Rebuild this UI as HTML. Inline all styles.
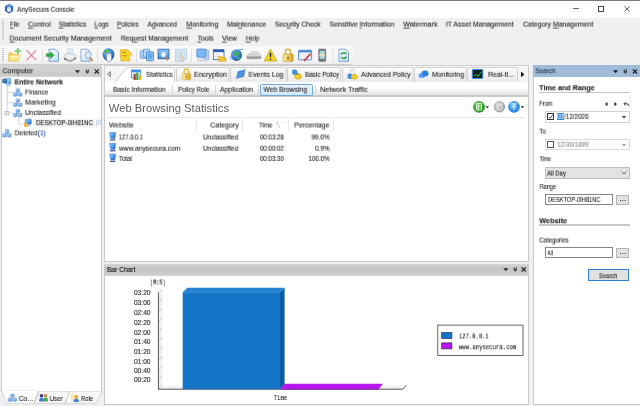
<!DOCTYPE html>
<html><head><meta charset="utf-8">
<style>
html,body{margin:0;padding:0;}
body{width:640px;height:406px;overflow:hidden;background:#f0f0f0;position:relative;font-family:"Liberation Sans",sans-serif;font-size:7.4px;color:#1a1a1a;}
.a{position:absolute;box-sizing:border-box;}
.t{position:absolute;white-space:nowrap;line-height:10px;height:10px;will-change:transform;-webkit-text-stroke:0.100px currentColor;}
.b{font-weight:bold;}
.ti{font-size:7.8px;color:#222;}
.h1{font-size:11.200px;color:#5c5c5c;-webkit-text-stroke:0;}
.mono{font-family:"Liberation Mono",monospace;font-size:7.200px;color:#111;}
.ax{font-size:6.6px;color:#222;}
u{text-decoration:underline;text-decoration-thickness:0.500px;text-underline-offset:0.500px;text-decoration-color:#555;}
svg{position:absolute;overflow:visible;}
</style></head><body>
<!-- title bar -->
<div class="a" style="left:0;top:0;width:640px;height:18px;background:#fff;border-top:1px solid #787878;"></div>
<svg style="left:5px;top:3.800px" width="8" height="10" viewBox="0 0 8 10"><path d="M4 0.200 L7.800 2.300 V6.900 L4 9.300 L0.200 6.900 V2.300 Z" fill="#2357c9" stroke="#2357c9" stroke-width="0.400" stroke-linejoin="round"/><path d="M4 0.600 L7 2.300 L4 3.400 L1 2.300 Z" fill="#4f9ee8"/><path d="M2.100 4 Q2.100 3 4 3 Q5.900 3 5.900 4 V6.300 Q5.900 7.600 4 7.900 Q2.100 7.600 2.100 6.300 Z" fill="#fff"/><rect x="3.600" y="3.600" width="0.800" height="1.100" fill="#2357c9"/></svg>
<div class="a" style="left:572.800px;top:8.400px;width:6px;height:0.900px;background:#666;"></div>
<div class="a" style="left:598px;top:5.600px;width:6.200px;height:6.300px;border:0.800px solid #444;"></div>
<svg style="left:624.300px;top:5.900px" width="7" height="7"><path d="M0.300 0.300 L5.700 5.700 M5.700 0.300 L0.300 5.700" stroke="#444" stroke-width="0.800"/></svg>

<div class="a" style="left:2px;top:21px;width:1.500px;height:20px;background:repeating-linear-gradient(#c2c2c2 0 1px,transparent 1px 2px);"></div>
<!-- toolbar -->
<div class="a" style="left:0;top:45.800px;width:353px;height:19.300px;background:linear-gradient(#fafafa,#f5f5f5 80%,#ececec);border-bottom:1.200px solid #cdcdcd;border-radius:0 0 3px 0;"></div>
<div class="a" style="left:2px;top:48px;width:1.500px;height:13px;background:repeating-linear-gradient(#bdbdbd 0 1px,transparent 1px 2px);"></div>
<!-- toolbar icons -->
<svg style="left:0;top:0" width="360" height="66">
<defs>
<linearGradient id="fy" x1="0" y1="0" x2="0" y2="1"><stop offset="0" stop-color="#fffac8"/><stop offset="1" stop-color="#f2d866"/></linearGradient>
<linearGradient id="db" x1="0" y1="0" x2="1" y2="1"><stop offset="0" stop-color="#ffffff"/><stop offset="1" stop-color="#c4dcf4"/></linearGradient>
<linearGradient id="wb" x1="0" y1="0" x2="0" y2="1"><stop offset="0" stop-color="#9ccbf5"/><stop offset="1" stop-color="#3d86d4"/></linearGradient>
<radialGradient id="gl" cx="40%" cy="35%" r="65%"><stop offset="0" stop-color="#7fc4ff"/><stop offset="1" stop-color="#1553b5"/></radialGradient>
<linearGradient id="gy" x1="0" y1="0" x2="0" y2="1"><stop offset="0" stop-color="#f2f2f2"/><stop offset="1" stop-color="#8f8f8f"/></linearGradient>
<linearGradient id="lk" x1="0" y1="0" x2="1" y2="0"><stop offset="0" stop-color="#fff2a0"/><stop offset="1" stop-color="#d9a521"/></linearGradient>
</defs>
<g transform="translate(0,55.300) scale(1,1.070) translate(0,-54.700)">
<!-- 1 folder + plus -->
<path d="M8.300 51.800 H12.500 L13.500 53.200 H18.800 V60 H8.300 Z" fill="#ecd06a"/>
<path d="M8 60.300 L10.200 54.600 H20.500 L18.300 60.300 Z" fill="url(#fy)" stroke="#d9b840" stroke-width="0.400"/>
<path d="M17.800 47.800 V53.600 M14.900 50.700 H20.700" stroke="#7fcf78" stroke-width="1.900"/>
<!-- 2 red X -->
<path d="M26.500 50 L36.200 59.300 M36.200 50 L26.500 59.300" stroke="#e8748c" stroke-width="1"/>
<line x1="42.500" y1="48" x2="42.500" y2="61" stroke="#d9d9d9" stroke-width="0.800"/>
<!-- 3 doc + green arrow -->
<path d="M49 49 H55.500 L58.500 52 V60.300 H49 Z" fill="url(#db)" stroke="#4a86c8" stroke-width="0.700"/>
<path d="M46.300 53.300 H50.500 V51.300 L54 54.600 L50.500 57.900 V55.900 H46.300 Z" fill="#2fae3a" stroke="#187a22" stroke-width="0.400"/>
<!-- 4 printer -->
<path d="M66.300 53.200 L68 48.300 L73.200 48.800 L72.300 54 Z" fill="#dcecfb" stroke="#a9c4e0" stroke-width="0.400"/>
<path d="M64 55.200 L68.500 52.600 L76 54.600 V58 L70.500 60.800 L64 58.600 Z" fill="#f0f0f0" stroke="#9a9a9a" stroke-width="0.400"/>
<path d="M64 56.800 L70.500 59 L76 56.300 V58 L70.500 60.800 L64 58.600 Z" fill="#7a7a7a"/>
<path d="M66.500 58.200 L70.300 59.600 L73.500 58" fill="none" stroke="#fff" stroke-width="0.700"/>
<!-- 5 preview -->
<path d="M81 49 H87.500 L90 51.500 V60.300 H81 Z" fill="url(#db)" stroke="#5b94d0" stroke-width="0.700"/>
<circle cx="88.300" cy="54.500" r="3" fill="#dff0ff" stroke="#7fa7cf" stroke-width="0.800"/>
<path d="M90.300 57 L92.500 60" stroke="#e0762a" stroke-width="1.500"/>
<line x1="97.600" y1="48" x2="97.600" y2="61" stroke="#d9d9d9" stroke-width="0.800"/>
<!-- 6 globe + mouse -->
<circle cx="108.500" cy="54" r="5.900" fill="url(#gl)"/>
<path d="M104 51 Q107 48.500 110 49.500 Q109 52 106 52.500 Q104.500 53.500 104 51 Z" fill="#4fbf4a"/>
<path d="M106.500 55 Q106.500 52.500 109 52.500 Q111.500 52.500 111.500 55 V58.500 Q111.500 60.500 109 60.500 Q106.500 60.500 106.500 58.500 Z" fill="#fafafa" stroke="#667" stroke-width="0.500"/>
<path d="M109 52.500 V55.500" stroke="#667" stroke-width="0.400"/>
<!-- 7 yellow tag -->
<path d="M120 49.500 H128 L132 54 L129.500 56 L130 60 H121 Z" fill="#f7d42a" stroke="#c79a12" stroke-width="0.500"/>
<path d="M122.500 52 H126 M122.500 54.500 Q124.500 56.500 127 54.500" stroke="#7a5a08" stroke-width="0.600" fill="none"/>
<line x1="136.600" y1="48" x2="136.600" y2="61" stroke="#d9d9d9" stroke-width="0.800"/>
<!-- 8 blue windows -->
<rect x="140.300" y="50.500" width="6.500" height="7" rx="0.800" fill="#b4d8f8" stroke="#3c78bd" stroke-width="0.600"/>
<rect x="143.300" y="49" width="6.500" height="7.500" rx="0.800" fill="#b4d8f8" stroke="#3c78bd" stroke-width="0.600"/>
<rect x="146.500" y="51.500" width="7" height="8.300" rx="0.800" fill="#9ccbf5" stroke="#2f6cb4" stroke-width="0.700"/><rect x="147.800" y="53" width="4.400" height="5.300" fill="#5fa8ec"/>
<!-- 9 screen magnifier -->
<rect x="158" y="49" width="11" height="9" fill="url(#wb)" stroke="#2e67ad" stroke-width="0.800"/>
<circle cx="163.500" cy="54" r="2.600" fill="#e9f5ff" stroke="#9fb9d6" stroke-width="0.700"/>
<path d="M165.500 56.300 L168 59.500" stroke="#d87a3a" stroke-width="1.300"/>
<!-- 10 doc hand -->
<path d="M175.500 49 H186.500 V58 L183 60.500 H175.500 Z" fill="#cfe2f6" stroke="#a9c5e6" stroke-width="0.600"/>
<path d="M180.500 52 L182 56 L184 57.500 L183 60 L181 59.500 Z" fill="#f3d7b0" stroke="#d8b48a" stroke-width="0.400"/>
<line x1="191.600" y1="48" x2="191.600" y2="61" stroke="#d9d9d9" stroke-width="0.800"/>
<!-- 11 computer -->
<rect x="203.500" y="49.500" width="5.500" height="9.500" rx="0.600" fill="#b9cdea" stroke="#7f9ccc" stroke-width="0.500"/>
<rect x="196.800" y="48.800" width="9" height="7.700" rx="0.800" fill="#7db9f2" stroke="#4a84cf" stroke-width="0.700"/>
<path d="M198 58 H205.500 L206.500 60 H197 Z" fill="#dfe8f5" stroke="#9db3d6" stroke-width="0.400"/>
<!-- 12 window folder -->
<rect x="213.300" y="49.500" width="10.700" height="9" fill="#fff" stroke="#2c5fae" stroke-width="0.800"/>
<rect x="213.300" y="49.500" width="10.700" height="2.300" fill="#2c5fae"/>
<path d="M215 54 H219 M215 56 H218" stroke="#8aa" stroke-width="0.500"/>
<path d="M218.500 55.500 H221 L221.800 56.500 H225.800 V60.300 H218.500 Z" fill="#f2c12e" stroke="#b88a10" stroke-width="0.400"/>
<!-- 13 IE globe -->
<circle cx="236.500" cy="54.500" r="5.500" fill="url(#gl)"/>
<path d="M233 52 Q236 50 238.500 51.500 Q239.500 54 237 55.500 Q234 56 233 52 Z M237 57 Q239 56 240.500 57.500 Q239 59.500 237 59 Z" fill="#3fb34a"/>
<path d="M231 58.500 Q229.500 55 236 51 Q241 48.300 243 49.500" fill="none" stroke="#3a8de0" stroke-width="0.800"/>
<!-- 14 drive -->
<path d="M246.700 55 L252.500 51.500 H257.500 L261 55 V57 Q261 58 259.500 58 H248 Q246.700 58 246.700 57 Z" fill="url(#gy)" stroke="#8a8a8a" stroke-width="0.400"/>
<path d="M246.700 55 H261" stroke="#fff" stroke-width="0.500"/>
<!-- 15 warning -->
<path d="M270.500 48.800 L276.800 60 H264.200 Z" fill="#f6d51f" stroke="#b8960c" stroke-width="0.600" stroke-linejoin="round"/>
<path d="M270.500 52.300 V56.300 M270.500 57.600 V58.800" stroke="#111" stroke-width="1.300"/>
<!-- 16 lock -->
<path d="M285.300 54 V51.500 Q285.300 49 288 49 Q290.700 49 290.700 51.500 V54" fill="none" stroke="#d9b43a" stroke-width="1.300"/>
<rect x="283" y="53.500" width="10.200" height="7" rx="1" fill="url(#lk)" stroke="#b98d1a" stroke-width="0.500"/>
<path d="M288 56 V58.300" stroke="#5a4208" stroke-width="1.100"/>
<!-- 17 window pencil -->
<rect x="298.600" y="50" width="13" height="9" rx="0.800" fill="#e9f1fa" stroke="#3f79c4" stroke-width="0.800"/>
<rect x="298.600" y="50" width="13" height="2" fill="#4d8ad6"/>
<path d="M304 60 L310.500 53.300" stroke="#d8383a" stroke-width="1.600"/>
<!-- 18 phone -->
<rect x="318.600" y="48.800" width="7.200" height="11.700" rx="1" fill="#6f7a80" stroke="#555" stroke-width="0.400"/>
<rect x="319.600" y="50.500" width="5.200" height="7.500" fill="#a9d6d6"/>
<rect x="319.600" y="53.500" width="5.200" height="2" fill="#e9dfc4"/>
<line x1="333" y1="48" x2="333" y2="61" stroke="#d9d9d9" stroke-width="0.800"/>
<!-- 19 refresh doc -->
<path d="M339 49 H345.500 L348.500 52 V60.300 H339 Z" fill="url(#db)" stroke="#4a86c8" stroke-width="0.700"/>
<path d="M341 54 Q343.500 51 346.500 53.500 M346.500 56 Q344 59 341 56.500" fill="none" stroke="#27a637" stroke-width="1.400"/>
</g>
</svg>


<!-- left panel -->
<div class="a" style="left:0;top:65.200px;width:102px;height:11.600px;background:linear-gradient(#d3d3d3,#cacaca 85%,#d8d8d8);"></div>
<div class="a" style="left:0.500px;top:76.800px;width:101.500px;height:315.600px;background:#fff;border:1px solid #c9c9c9;border-top:none;"></div>
<svg style="left:75px;top:68.800px" width="26" height="6"><path d="M0 1.200 H5 L2.500 4.200 Z" fill="#222"/><path d="M11.300 0.300 V3 H13.300 V0.300 M10.600 3 H14 M12.300 3 V4.600" stroke="#222" stroke-width="0.800" fill="none"/><path d="M19.600 0.300 L23.800 4.500 M23.800 0.300 L19.600 4.500" stroke="#222" stroke-width="1.100"/></svg>
<!-- bottom tabs -->
<svg style="left:0;top:391.400px" width="104" height="15"><path d="M39 0.500 L34.500 12.600 H64.500 L69.500 0.500" fill="#f7f7f7" stroke="#c4c4c4" stroke-width="0.700"/><path d="M69.500 0.500 L65 12.600 H95.500 L102.300 0.500" fill="#f7f7f7" stroke="#c4c4c4" stroke-width="0.700"/><path d="M1.800 0 L6.500 12.600 H33.500 L38.500 0 Z" fill="#fff" stroke="#c4c4c4" stroke-width="0.700"/><path d="M2.300 0.300 H38" stroke="#fff" stroke-width="1.200"/></svg>

<!-- center top -->
<div class="a" style="left:103.900px;top:64.700px;width:425.600px;height:17.800px;background:#f5f5f5;border:1px solid #cfcfcf;border-bottom:none;"></div>
<svg style="left:104px;top:65px" width="426" height="18">
<path d="M11.500 16.500 L21.500 4.500 Q23 2.500 25.500 2.500 H69 Q70.5 2.5 70.5 4 V16.5" fill="#fff" stroke="#c4c4c4" stroke-width="0.8"/>
<defs><linearGradient id="tg" x1="0" y1="0" x2="0" y2="1"><stop offset="0" stop-color="#fdfdfd"/><stop offset="1" stop-color="#e9e9e9"/></linearGradient></defs><g fill="url(#tg)" stroke="#c8c8c8" stroke-width="0.8">
<path d="M72.500 16.5 V4 Q72.500 2.500 74.000 2.500 H123.500 Q125.000 2.500 125.000 4 V16.5"/>
<path d="M126.400 16.500 V4 Q126.400 2.500 127.900 2.500 H180.500 Q182 2.500 182 4 V16.500"/>
<path d="M183.500 16.500 V4 Q183.500 2.500 185 2.500 H235 Q236.500 2.500 236.500 4 V16.500"/>
<path d="M238.500 16.5 V4 Q238.500 2.500 240.000 2.500 H307.500 Q309.000 2.500 309.000 4 V16.5"/>
<path d="M310.500 16.500 V4 Q310.500 2.500 312.000 2.500 H360.500 Q362.000 2.500 362.000 4 V16.5"/>
<path d="M363.500 16.500 V4 Q363.500 2.500 365.000 2.500 H412.000 Q413.500 2.500 413.500 4 V16.5"/>
</g>
<path d="M6.400 6.600 V11.800 L3.400 9.200 Z" fill="#ddd" stroke="#555" stroke-width="0.700"/>
<path d="M417 6.500 V12.300 L420.400 9.400 Z" fill="#111"/>
<path d="M0 17.500 H11.500 M70.500 17.500 H426" stroke="#c4c4c4" stroke-width="0.8"/>
</svg>
<!-- sub tabs -->
<div class="a" style="left:103.900px;top:82px;width:425.600px;height:14.300px;background:linear-gradient(#fff 0 40%,#e2e2e2);border-left:1px solid #cfcfcf;border-right:1px solid #cfcfcf;border-bottom:1px solid #c9c9c9;"></div>
<div class="a" style="left:171.600px;top:85px;width:1px;height:9px;background:#d5d5d5;"></div>
<div class="a" style="left:214.800px;top:85px;width:1px;height:9px;background:#d5d5d5;"></div>
<div class="a" style="left:257.600px;top:85px;width:1px;height:9px;background:#d5d5d5;"></div>
<div class="a" style="left:315px;top:85px;width:1px;height:9px;background:#d5d5d5;"></div>
<div class="a" style="left:260px;top:84px;width:53px;height:11.500px;background:linear-gradient(#eaf4fc,#d5e8f8);border:1px solid #6fa8d8;border-radius:1.500px;"></div>
<!-- content -->
<div class="a" style="left:103.900px;top:96.300px;width:425.600px;height:165.400px;background:#fff;border:1px solid #c9c9c9;"></div>
<div class="a" style="left:106.500px;top:116.600px;width:418px;height:1px;background:#e8e8e8;"></div>
<div class="a" style="left:196px;top:118.500px;width:1px;height:12.700px;background:#e7e7e7;"></div>
<div class="a" style="left:241.500px;top:118.500px;width:1px;height:12.700px;background:#e7e7e7;"></div>
<div class="a" style="left:287.500px;top:118.500px;width:1px;height:12.700px;background:#e7e7e7;"></div>
<div class="a" style="left:332.500px;top:118.500px;width:1px;height:12.700px;background:#e7e7e7;"></div>
<svg style="left:276px;top:122px" width="8" height="7"><path d="M0.500 0.500 H2 M6 0.500 H7 M0.800 0.500 L4 6.300" fill="none" stroke="#9a9a9a" stroke-width="0.600"/></svg>
<!-- circle buttons -->
<svg style="left:472px;top:99.700px" width="54" height="14">
<defs>
<radialGradient id="gg" cx="40%" cy="35%" r="70%"><stop offset="0" stop-color="#5fd24f"/><stop offset="1" stop-color="#128a12"/></radialGradient>
<radialGradient id="gr" cx="40%" cy="35%" r="70%"><stop offset="0" stop-color="#d6d6d6"/><stop offset="1" stop-color="#9a9a9a"/></radialGradient>
<radialGradient id="gb" cx="40%" cy="35%" r="70%"><stop offset="0" stop-color="#6cc0ff"/><stop offset="1" stop-color="#1a7be0"/></radialGradient>
</defs>
<circle cx="7" cy="6.800" r="5.900" fill="url(#gg)"/>
<rect x="4.500" y="3.600" width="5" height="6.400" fill="none" stroke="#fff" stroke-width="0.8"/><path d="M4.500 5.800 H9.500 M4.500 7.800 H9.500 M6.500 3.600 V10" stroke="#fff" stroke-width="0.6"/>
<path d="M13.800 6.200 H17 L15.400 8.200 Z" fill="#222"/>
<circle cx="27.400" cy="6.800" r="5.700" fill="url(#gr)"/>
<rect x="24.900" y="4" width="5" height="5.800" fill="none" stroke="#e8e8e8" stroke-width="0.8"/><path d="M24.900 5.800 H29.900 M26.600 5.800 V9.800" stroke="#e8e8e8" stroke-width="0.6"/>
<circle cx="42" cy="6.800" r="5.900" fill="url(#gb)"/>
<path d="M39.300 4 H44.700 M42 10 V5.600 M39.800 7.600 L42 5.400 L44.200 7.600" fill="none" stroke="#fff" stroke-width="1"/>
<path d="M49 6.200 H52.200 L50.600 8.200 Z" fill="#222"/>
</svg>

<!-- bar chart -->
<div class="a" style="left:103.900px;top:264.200px;width:425.600px;height:11.600px;background:linear-gradient(#d6d6d6,#c6c6c6 30%,#cbcbcb 85%,#d8d8d8);"></div>
<div class="a" style="left:103.900px;top:275.800px;width:425.600px;height:129.700px;background:#fff;border:1px solid #c9c9c9;border-top:none;"></div>
<svg style="left:503.400px;top:267.300px" width="26" height="6"><path d="M0.300 1.200 H5.300 L2.800 4.200 Z" fill="#222"/><path d="M11.300 0.300 V3 H13.300 V0.300 M10.600 3 H14 M12.300 3 V4.600" stroke="#222" stroke-width="0.800" fill="none"/><path d="M18.600 0.300 L22.800 4.500 M22.800 0.300 L18.600 4.500" stroke="#222" stroke-width="1.100"/></svg>
<svg style="left:0;top:0" width="640" height="406">
<!-- axis wall -->
<path d="M158.400 292.700 L162.300 289 V385.400 L158.400 389.200 Z" fill="#f1f1f1"/>
<path d="M158.400 389.200 L162.300 385.400 H406.300 L402.500 389.200 Z" fill="#f4f4f4"/>
<g stroke="#9a9a9a" stroke-width="0.500">
<path d="M158.400 292.700 l3.900 -3.700 M158.400 302.370 l3.900 -3.700 M158.400 312.040 l3.900 -3.700 M158.400 321.710 l3.900 -3.700 M158.400 331.380 l3.900 -3.700 M158.400 341.050 l3.900 -3.700 M158.400 350.720 l3.900 -3.700 M158.400 360.390 l3.900 -3.700 M158.400 370.060 l3.900 -3.700 M158.400 379.730 l3.900 -3.700 M158.400 389.200 l3.900 -3.800"/>
</g>
<path d="M158.400 292.500 V389.200 H402.500 L406.300 385.400" fill="none" stroke="#2a2a2a" stroke-width="0.800"/>
<!-- blue bar -->
<path d="M182.700 292.200 L187.300 287.800 H284.600 L280 292.200 Z" fill="#2483d5"/>
<path d="M280 292.200 L284.600 287.800 V384.600 L280 389.200 Z" fill="#0d5ba6"/>
<rect x="182.700" y="292.200" width="97.300" height="97" fill="#1475c6"/>
<!-- purple bar -->
<path d="M280 389.200 L285 383.800 H383 L378.700 389.200 Z" fill="#b916f2"/>
<path d="M280 389.200 H378.700" stroke="#7a0fa8" stroke-width="0.600"/>
<!-- legend -->
<rect x="437.800" y="325.100" width="85.200" height="30.400" fill="#fff" stroke="#444" stroke-width="0.800"/>
<rect x="441.700" y="332.500" width="10.200" height="6" fill="#1475c6" stroke="#1a1a3a" stroke-width="0.600"/>
<rect x="441.700" y="342.900" width="10.200" height="6" fill="#b916f2" stroke="#1a1a3a" stroke-width="0.600"/>
</svg>

<!-- search panel -->
<div class="a" style="left:532.500px;top:65px;width:107.500px;height:11.700px;background:#a0bbda;"></div>
<div class="a" style="left:532.500px;top:76.700px;width:107.500px;height:328.800px;background:#fff;border-left:1px solid #c9c9c9;border-bottom:1px solid #c9c9c9;"></div>
<svg style="left:613px;top:68.500px" width="26" height="6"><path d="M0 1.200 H5 L2.500 4.200 Z" fill="#1a1a1a"/><path d="M11.300 0.300 V3 H13.300 V0.300 M10.600 3 H14 M12.300 3 V4.600" stroke="#1a1a1a" stroke-width="0.800" fill="none"/><path d="M19.800 0.300 L24 4.500 M24 0.300 L19.800 4.500" stroke="#1a1a1a" stroke-width="1.100"/></svg>
<div class="a" style="left:539px;top:91.800px;width:90.500px;height:1.200px;background:#c6c6c6;"></div>
<svg style="left:603px;top:100.500px" width="28" height="7"><path d="M4.500 1 V5.200 L1.900 3.100 Z M11.400 1 V5.200 L14 3.100 Z" fill="#222"/><path d="M21.200 2.800 H24 Q26 2.800 26 5 M22.600 1.200 L21 2.800 L22.600 4.400" fill="none" stroke="#222" stroke-width="0.900"/></svg>
<div class="a" style="left:545px;top:111px;width:84.500px;height:11.500px;background:#fff;border:1px solid #cfcfcf;"></div>
<div class="a" style="left:547.200px;top:113.200px;width:7.300px;height:7.300px;background:#fff;border:0.700px solid #333;"></div>
<svg style="left:547.200px;top:113.200px" width="8" height="8"><path d="M1.600 3.700 L3.100 5.300 L5.800 1.800" fill="none" stroke="#222" stroke-width="0.800"/></svg>
<div class="a" style="left:556.500px;top:113.200px;width:7.300px;height:7.300px;background:#2a7fd6;"></div>
<svg style="left:621.500px;top:115.800px" width="5" height="3"><path d="M0 0 H4 L2 2.400 Z" fill="#333"/></svg>
<div class="a" style="left:545px;top:139.200px;width:84.500px;height:11px;background:#fff;border:1px solid #d9d9d9;"></div>
<div class="a" style="left:547.200px;top:141.200px;width:7.300px;height:7.300px;background:#fff;border:0.700px solid #555;"></div>
<svg style="left:621.500px;top:143.800px" width="5" height="3"><path d="M0 0 H4 L2 2.400 Z" fill="#999"/></svg>
<div class="a" style="left:545px;top:167.200px;width:84.500px;height:11.400px;background:#e3e3e3;border:1px solid #bdbdbd;"></div>
<svg style="left:621px;top:171.300px" width="6" height="4"><path d="M0.500 0.500 L3 3 L5.500 0.500" fill="none" stroke="#444" stroke-width="0.8"/></svg>
<div class="a" style="left:545px;top:194.200px;width:68px;height:11px;background:#fff;border:1px solid #858585;"></div>
<div class="a" style="left:616.300px;top:194.600px;width:12.600px;height:10.300px;background:#e2e2e2;border:1px solid #b4b4b4;"></div>
<div class="a" style="left:539px;top:224.400px;width:90.500px;height:1.200px;background:#c6c6c6;"></div>
<div class="a" style="left:545px;top:247.100px;width:68px;height:11px;background:#fff;border:1px solid #858585;"></div>
<div class="a" style="left:616.300px;top:247.500px;width:12.600px;height:10.300px;background:#e2e2e2;border:1px solid #b4b4b4;"></div>
<div class="a" style="left:587.800px;top:269px;width:41.200px;height:12px;background:#e1e1e1;border:1.200px solid #2f80d4;"></div>

<svg style="left:0;top:0" width="640" height="406">
<defs>
<linearGradient id="mb" x1="0" y1="0" x2="1" y2="1"><stop offset="0" stop-color="#8fd0ff"/><stop offset="1" stop-color="#1f6fd6"/></linearGradient><linearGradient id="mc" x1="0" y1="0" x2="1" y2="1"><stop offset="0" stop-color="#c4e4fc"/><stop offset="1" stop-color="#4f98e2"/></linearGradient>
<linearGradient id="pcg" x1="0" y1="0" x2="1" y2="1"><stop offset="0" stop-color="#9fe0ff"/><stop offset="0.500" stop-color="#4aa0f0"/><stop offset="1" stop-color="#2448b8"/></linearGradient></defs>
<!-- tree lines -->
<path d="M7.300 86 V113 M7.300 92.500 H13 M7.300 102.600 H13 M8.500 113 H13 M18.700 116.500 V124.200 H24" fill="none" stroke="#b8b8b8" stroke-width="0.600"/>
<rect x="4.900" y="111.500" width="3.500" height="3.500" fill="#fff" stroke="#909090" stroke-width="0.500"/><path d="M5.700 113.250 H7.600" stroke="#555" stroke-width="0.500"/>
<!-- entire network icon -->
<rect x="5.600" y="78.300" width="5.200" height="5.700" rx="0.600" fill="url(#mc)" stroke="#3f78c4" stroke-width="0.500"/>
<path d="M6.300 84.400 H10.200 V86.200 H6.300 Z" fill="#c8d8ee" stroke="#8fa8cc" stroke-width="0.300"/>
<circle cx="4.600" cy="81" r="2.400" fill="#1f5fb8"/>
<path d="M3 80.300 Q4.400 78.800 5.800 79.800 Q5.500 81.300 4 81.500 Z" fill="#4fb858"/>
<g transform="translate(13.200,88.800)"><path d="M4.500 2.500 V4.500 M2 5.500 V4.300 H7 V5.500" fill="none" stroke="#8a97a8" stroke-width="0.500"/>
<rect x="2.800" y="0" width="3.600" height="3" rx="0.400" fill="url(#mc)" stroke="#4a78b8" stroke-width="0.400"/>
<rect x="0.200" y="4" width="3.800" height="3.300" rx="0.400" fill="url(#mc)" stroke="#4a78b8" stroke-width="0.400"/>
<rect x="5" y="4" width="3.800" height="3.300" rx="0.400" fill="url(#mc)" stroke="#4a78b8" stroke-width="0.400"/>
<path d="M1 7.700 H3.200 M5.800 7.700 H8" stroke="#8fa4c0" stroke-width="0.500"/></g>
<g transform="translate(13.200,98.900)"><path d="M4.500 2.500 V4.500 M2 5.500 V4.300 H7 V5.500" fill="none" stroke="#8a97a8" stroke-width="0.500"/>
<rect x="2.800" y="0" width="3.600" height="3" rx="0.400" fill="url(#mc)" stroke="#4a78b8" stroke-width="0.400"/>
<rect x="0.200" y="4" width="3.800" height="3.300" rx="0.400" fill="url(#mc)" stroke="#4a78b8" stroke-width="0.400"/>
<rect x="5" y="4" width="3.800" height="3.300" rx="0.400" fill="url(#mc)" stroke="#4a78b8" stroke-width="0.400"/>
<path d="M1 7.700 H3.200 M5.800 7.700 H8" stroke="#8fa4c0" stroke-width="0.500"/></g>
<g transform="translate(13.200,109.200)"><path d="M4.500 2.500 V4.500 M2 5.500 V4.300 H7 V5.500" fill="none" stroke="#8a97a8" stroke-width="0.500"/>
<rect x="2.800" y="0" width="3.600" height="3" rx="0.400" fill="url(#mc)" stroke="#4a78b8" stroke-width="0.400"/>
<rect x="0.200" y="4" width="3.800" height="3.300" rx="0.400" fill="url(#mc)" stroke="#4a78b8" stroke-width="0.400"/>
<rect x="5" y="4" width="3.800" height="3.300" rx="0.400" fill="url(#mc)" stroke="#4a78b8" stroke-width="0.400"/>
<path d="M1 7.700 H3.200 M5.800 7.700 H8" stroke="#8fa4c0" stroke-width="0.500"/></g>
<g transform="translate(2.400,129.500)"><path d="M4.500 2.500 V4.500 M2 5.500 V4.300 H7 V5.500" fill="none" stroke="#8a97a8" stroke-width="0.500"/>
<rect x="2.800" y="0" width="3.600" height="3" rx="0.400" fill="url(#mc)" stroke="#4a78b8" stroke-width="0.400"/>
<rect x="0.200" y="4" width="3.800" height="3.300" rx="0.400" fill="url(#mc)" stroke="#4a78b8" stroke-width="0.400"/>
<rect x="5" y="4" width="3.800" height="3.300" rx="0.400" fill="url(#mc)" stroke="#4a78b8" stroke-width="0.400"/>
<path d="M1 7.700 H3.200 M5.800 7.700 H8" stroke="#8fa4c0" stroke-width="0.500"/></g>
<!-- desktop row highlight + icon -->
<rect x="33.500" y="118.800" width="61" height="8.600" fill="#f1f1f1"/>
<rect x="25.300" y="119.200" width="6" height="5" rx="0.500" fill="url(#mb)" stroke="#2f66b5" stroke-width="0.500"/>
<path d="M27 125 H30.500 V126.300 H27 Z" fill="#b9cbe4"/>
<rect x="24.200" y="123.300" width="3.600" height="3.300" fill="#f2c330" stroke="#b98d1a" stroke-width="0.300"/>
<path d="M25 123.300 V122.500 Q26 121.400 27 122.500 V123.300" fill="none" stroke="#c9a030" stroke-width="0.500"/>
<circle cx="98.800" cy="122" r="2.200" fill="#e8f3ff" stroke="#8fb0d8" stroke-width="0.600"/><path d="M97.300 123.800 L95.800 126" stroke="#9ab0cc" stroke-width="0.900"/>
<!-- bottom tab icons -->
<g transform="translate(7.800,394)"><path d="M4.500 2.500 V4.500 M2 5.500 V4.300 H7 V5.500" fill="none" stroke="#8a97a8" stroke-width="0.500"/>
<rect x="2.800" y="0" width="3.600" height="3" rx="0.400" fill="url(#mc)" stroke="#4a78b8" stroke-width="0.400"/>
<rect x="0.200" y="4" width="3.800" height="3.300" rx="0.400" fill="url(#mc)" stroke="#4a78b8" stroke-width="0.400"/>
<rect x="5" y="4" width="3.800" height="3.300" rx="0.400" fill="url(#mc)" stroke="#4a78b8" stroke-width="0.400"/>
<path d="M1 7.700 H3.200 M5.800 7.700 H8" stroke="#8fa4c0" stroke-width="0.500"/></g>
<circle cx="41.500" cy="395.800" r="1.800" fill="#3a3a8c"/><circle cx="45.500" cy="395.800" r="1.800" fill="#c98a2a"/>
<path d="M39 401.500 Q39 397.500 41.500 397.500 Q44 397.500 44 401.500 Z" fill="#3f7fe0"/><path d="M43.200 401.500 Q43.200 397.500 45.700 397.500 Q48.200 397.500 48.200 401.500 Z" fill="#3fae4a"/>
<path d="M70.700 393.500 H74 L74.800 394.500 H78.500 V400.500 H70.700 Z" fill="#fbe9a8"/>
<circle cx="76.300" cy="396.800" r="1.700" fill="#e0a060"/><path d="M73.500 402 Q73.500 398.500 76.300 398.500 Q79 398.500 79 402 Z" fill="#3f7fe0"/>
<!-- tab icons -->
<!-- statistics -->
<rect x="131.600" y="70" width="9" height="8" fill="#dbeeff" stroke="#3d8ee6" stroke-width="0.800"/>
<rect x="131.600" y="70" width="9" height="2.200" fill="#3d8ee6"/>
<rect x="133.600" y="74" width="2.200" height="6" fill="#c0392b"/><rect x="136.200" y="72.500" width="2.200" height="7.500" fill="#3aa83a"/><rect x="138.900" y="75" width="2.400" height="5" fill="#f0b820"/>
<!-- lock -->
<path d="M184.100 74 V71.600 Q184.100 69 186.400 69 Q188.700 69 188.700 71.600 V74" fill="none" stroke="#e6c040" stroke-width="1.400"/>
<rect x="182.200" y="73.500" width="8.400" height="6.300" rx="1" fill="url(#lk)" stroke="#c9a030" stroke-width="0.500"/>
<path d="M186.400 75.700 V77.700" stroke="#7a5a10" stroke-width="0.900"/>
<!-- events log -->
<path d="M238 71.500 L245.500 69.500 L244.500 71.700 L237 73.500 Z M237.500 74 L245 72 L244 74.200 L236.500 76 Z M237 76.500 L244.500 74.500 L243.500 76.700 L236 78.500 Z" fill="#3b8fe8" stroke="#1e62b8" stroke-width="0.300"/>
<!-- basic policy -->
<circle cx="294.800" cy="72.300" r="2.700" fill="#3f8fe0"/><path d="M293 70.500 L291.800 69.500" stroke="#3f8fe0" stroke-width="0.800"/>
<ellipse cx="298" cy="76.500" rx="3.500" ry="2.800" fill="#f2cc2a" stroke="#b8960c" stroke-width="0.400"/>
<path d="M296 74 H299.500" stroke="#444" stroke-width="0.600"/>
<!-- advanced policy -->
<path d="M350.800 69.500 H353.800 V71.500 L355.500 75 H349 L350.800 71.500 Z" fill="#f4f8fc" stroke="#8aa4c4" stroke-width="0.400"/>
<ellipse cx="350" cy="76.300" rx="2.600" ry="2.800" fill="#3f8fe0"/>
<ellipse cx="354.300" cy="76.800" rx="3.200" ry="2.500" fill="#f2cc2a" stroke="#b8960c" stroke-width="0.400"/>
<!-- monitoring -->
<ellipse cx="421.800" cy="75.500" rx="3.300" ry="2.600" fill="#5aa6f0"/><ellipse cx="425" cy="73.500" rx="3.500" ry="3" fill="#2f7fe0"/>
<!-- real-time -->
<rect x="472.300" y="69.500" width="10.500" height="9" rx="0.800" fill="#10201a" stroke="#3f8fe8" stroke-width="1"/>
<path d="M474 76 L476.500 74.500 L478 76.500 L481 72" fill="none" stroke="#3fe05a" stroke-width="0.800"/>
<!-- row icons -->
<g transform="translate(109.100,132.500)"><path d="M0.300 0 H6.600 L5.700 6.200 H1.700 Z" fill="url(#pcg)" stroke="#2f55c0" stroke-width="0.400" stroke-linejoin="round"/><path d="M1 6.700 H6.200 V8.100 H1 Z" fill="#46527e"/><path d="M2 6.500 H5.300" stroke="#e8eefc" stroke-width="0.500"/></g>
<g transform="translate(109.100,143.300)"><path d="M0.300 0 H6.600 L5.700 6.200 H1.700 Z" fill="url(#pcg)" stroke="#2f55c0" stroke-width="0.400" stroke-linejoin="round"/><path d="M1 6.700 H6.200 V8.100 H1 Z" fill="#46527e"/><path d="M2 6.500 H5.300" stroke="#e8eefc" stroke-width="0.500"/></g>
<g transform="translate(109.100,153.900)"><path d="M0.300 0 H6.600 L5.700 6.200 H1.700 Z" fill="url(#pcg)" stroke="#2f55c0" stroke-width="0.400" stroke-linejoin="round"/><path d="M1 6.700 H6.200 V8.100 H1 Z" fill="#46527e"/><path d="M2 6.500 H5.300" stroke="#e8eefc" stroke-width="0.500"/></g>
</svg>

<div class="t ti" style="left:17px;transform-origin:0 50%;top:4px;transform:translate(0.00px,0.80px) scaleX(0.834);">AnySecura Console</div>
<div class="t" style="left:10px;transform-origin:0 50%;top:19px;transform:translate(0.00px,0.60px) scaleX(0.797);"><u>F</u>ile</div>
<div class="t" style="left:28px;transform-origin:0 50%;top:19px;transform:translate(0.00px,0.60px) scaleX(0.954);"><u>C</u>ontrol</div>
<div class="t" style="left:58px;transform-origin:0 50%;top:19px;transform:translate(0.75px,0.60px) scaleX(0.930);"><u>S</u>tatistics</div>
<div class="t" style="left:94px;transform-origin:0 50%;top:19px;transform:translate(0.50px,0.60px) scaleX(0.888);"><u>L</u>ogs</div>
<div class="t" style="left:117px;transform-origin:0 50%;top:19px;transform:translate(0.00px,0.60px) scaleX(0.853);"><u>P</u>olicies</div>
<div class="t" style="left:147px;transform-origin:0 50%;top:19px;transform:translate(0.50px,0.60px) scaleX(0.896);">A<u>d</u>vanced</div>
<div class="t" style="left:186px;transform-origin:0 50%;top:19px;transform:translate(0.25px,0.60px) scaleX(0.927);"><u>M</u>onitoring</div>
<div class="t" style="left:227px;transform-origin:0 50%;top:19px;transform:translate(0.00px,0.60px) scaleX(0.927);">Mai<u>n</u>tenance</div>
<div class="t" style="left:275px;transform-origin:0 50%;top:19px;transform:translate(0.00px,0.60px) scaleX(0.915);">Sec<u>u</u>rity Check</div>
<div class="t" style="left:329px;transform-origin:0 50%;top:19px;transform:translate(0.50px,0.60px) scaleX(0.938);">Sensitive <u>I</u>nformation</div>
<div class="t" style="left:403px;transform-origin:0 50%;top:19px;transform:translate(0.25px,0.60px) scaleX(0.955);"><u>W</u>atermark</div>
<div class="t" style="left:445px;transform-origin:0 50%;top:19px;transform:translate(0.75px,0.60px) scaleX(0.948);">IT Asset Management</div>
<div class="t" style="left:523px;transform-origin:0 50%;top:19px;transform:translate(0.00px,0.60px) scaleX(0.934);">Category <u>M</u>anagement</div>
<div class="t" style="left:9px;transform-origin:0 50%;top:33px;transform:translate(0.50px,0.60px) scaleX(0.950);"><u>D</u>ocument Security Management</div>
<div class="t" style="left:120px;transform-origin:0 50%;top:33px;transform:translate(0.75px,0.60px) scaleX(0.928);">Req<u>u</u>est Management</div>
<div class="t" style="left:197px;transform-origin:0 50%;top:33px;transform:translate(0.50px,0.60px) scaleX(0.941);"><u>T</u>ools</div>
<div class="t" style="left:222px;transform-origin:0 50%;top:33px;transform:translate(0.00px,0.60px) scaleX(0.944);"><u>V</u>iew</div>
<div class="t" style="left:245px;transform-origin:0 50%;top:33px;transform:translate(0.75px,0.60px) scaleX(0.903);"><u>H</u>elp</div>
<div class="t" style="left:2px;transform-origin:0 50%;top:66px;transform:translate(0.50px,0.20px) scaleX(0.940);">Computer</div>
<div class="t b" style="left:14px;transform-origin:0 50%;top:77px;transform:translate(0.50px,0.40px) scaleX(0.930);">Entire Network</div>
<div class="t" style="left:25px;transform-origin:0 50%;top:87px;transform:translate(0.00px,0.50px) scaleX(0.886);">Finance</div>
<div class="t" style="left:25px;transform-origin:0 50%;top:97px;transform:translate(0.00px,0.60px) scaleX(0.946);">Marketing</div>
<div class="t" style="left:25px;transform-origin:0 50%;top:107px;transform:translate(0.00px,0.90px) scaleX(0.903);">Unclassified</div>
<div class="t" style="left:36px;transform-origin:0 50%;top:118px;transform:translate(0.00px,0.10px) scaleX(0.838);">DESKTOP-0IH81NC</div>
<div class="t" style="left:14px;transform-origin:0 50%;top:128px;transform:translate(0.60px,0.30px) scaleX(0.904);">Deleted<span style="color:#1f3fbf">(1)</span></div>
<div class="t" style="left:18px;transform-origin:0 50%;top:394px;transform:translate(0.70px,0.00px) scaleX(0.935);">Co...</div>
<div class="t" style="left:49px;transform-origin:0 50%;top:394px;transform:translate(0.60px,0.00px) scaleX(0.839);">User</div>
<div class="t" style="left:81px;transform-origin:0 50%;top:394px;transform:translate(0.00px,0.00px) scaleX(0.802);">Role</div>
<div class="t" style="left:146px;transform-origin:0 50%;top:69px;transform:translate(0.00px,0.80px) scaleX(0.913);">Statistics</div>
<div class="t" style="left:194px;transform-origin:0 50%;top:69px;transform:translate(0.00px,0.80px) scaleX(0.945);">Encryption</div>
<div class="t" style="left:248px;transform-origin:0 50%;top:69px;transform:translate(0.50px,0.80px) scaleX(0.946);">Events Log</div>
<div class="t" style="left:305px;transform-origin:0 50%;top:69px;transform:translate(0.00px,0.80px) scaleX(0.853);">Basic Policy</div>
<div class="t" style="left:361px;transform-origin:0 50%;top:69px;transform:translate(0.00px,0.80px) scaleX(0.906);">Advanced Policy</div>
<div class="t" style="left:432px;transform-origin:0 50%;top:69px;transform:translate(0.00px,0.80px) scaleX(0.927);">Monitoring</div>
<div class="t" style="left:488px;transform-origin:0 50%;top:69px;transform:translate(0.00px,0.80px) scaleX(0.944);">Real-ti...</div>
<div class="t" style="left:113px;transform-origin:0 50%;top:84px;transform:translate(0.00px,0.80px) scaleX(0.919);">Basic Information</div>
<div class="t" style="left:178px;transform-origin:0 50%;top:84px;transform:translate(0.00px,0.80px) scaleX(0.852);">Policy Role</div>
<div class="t" style="left:220px;transform-origin:0 50%;top:84px;transform:translate(0.00px,0.80px) scaleX(0.913);">Application</div>
<div class="t" style="left:263px;transform-origin:0 50%;top:84px;transform:translate(0.50px,0.80px) scaleX(0.915);">Web Browsing</div>
<div class="t" style="left:320px;transform-origin:0 50%;top:84px;transform:translate(0.00px,0.80px) scaleX(0.966);">Network Traffic</div>
<div class="t h1" style="left:108px;transform-origin:0 50%;top:102px;transform:translate(0.75px,0.60px) scaleX(1.004);">Web Browsing Statistics</div>
<div class="t" style="left:109px;transform-origin:0 50%;top:120px;transform:translate(0.00px,0.50px) scaleX(0.929);">Website</div>
<div class="t" style="right:401px;transform-origin:100% 50%;top:120px;transform:translate(-0.25px,0.50px) scaleX(0.950);">Category</div>
<div class="t" style="left:258px;transform-origin:0 50%;top:120px;transform:translate(0.75px,0.50px) scaleX(0.851);">Time</div>
<div class="t" style="left:294px;transform-origin:0 50%;top:120px;transform:translate(0.25px,0.50px) scaleX(0.932);">Percentage</div>
<div class="t" style="left:118px;transform-origin:0 50%;top:132px;transform:translate(0.80px,0.50px) scaleX(0.785);">127.0.0.1</div>
<div class="t" style="left:203px;transform-origin:0 50%;top:132px;transform:translate(0.00px,0.50px) scaleX(0.884);">Unclassified</div>
<div class="t" style="left:260px;transform-origin:0 50%;top:132px;transform:translate(0.00px,0.50px) scaleX(0.825);">00:03:28</div>
<div class="t" style="left:311px;transform-origin:0 50%;top:132px;transform:translate(0.50px,0.50px) scaleX(0.858);">99.0%</div>
<div class="t" style="left:118px;transform-origin:0 50%;top:143px;transform:translate(0.80px,0.70px) scaleX(0.910);">www.anysecura.com</div>
<div class="t" style="left:203px;transform-origin:0 50%;top:143px;transform:translate(0.00px,0.70px) scaleX(0.884);">Unclassified</div>
<div class="t" style="left:260px;transform-origin:0 50%;top:143px;transform:translate(0.00px,0.70px) scaleX(0.825);">00:00:02</div>
<div class="t" style="left:315px;transform-origin:0 50%;top:143px;transform:translate(0.10px,0.70px) scaleX(0.854);">0.9%</div>
<div class="t" style="left:118px;transform-origin:0 50%;top:153px;transform:translate(0.80px,0.90px) scaleX(0.845);">Total</div>
<div class="t" style="left:260px;transform-origin:0 50%;top:153px;transform:translate(0.00px,0.90px) scaleX(0.825);">00:03:30</div>
<div class="t" style="left:308px;transform-origin:0 50%;top:153px;transform:translate(0.50px,0.90px) scaleX(0.837);">100.0%</div>
<div class="t" style="left:107px;transform-origin:0 50%;top:265px;transform:translate(0.00px,0.00px) scaleX(0.898);color:#111;">Bar Chart</div>
<div class="t mono" style="left:150px;transform-origin:0 50%;top:277px;transform:translate(0.00px,0.40px) scaleX(0.723);">(M:S)</div>
<div class="t ax" style="left:133px;transform-origin:0 50%;top:288px;transform:translate(0.90px,0.00px) scaleX(1.011);">03:20</div>
<div class="t ax" style="left:133px;transform-origin:0 50%;top:298px;transform:translate(0.90px,0.00px) scaleX(1.011);">03:00</div>
<div class="t ax" style="left:133px;transform-origin:0 50%;top:308px;transform:translate(0.90px,0.00px) scaleX(1.011);">02:40</div>
<div class="t ax" style="left:133px;transform-origin:0 50%;top:318px;transform:translate(0.90px,0.00px) scaleX(1.011);">02:20</div>
<div class="t ax" style="left:133px;transform-origin:0 50%;top:328px;transform:translate(0.90px,0.00px) scaleX(1.011);">02:00</div>
<div class="t ax" style="left:133px;transform-origin:0 50%;top:337px;transform:translate(0.90px,0.00px) scaleX(1.011);">01:40</div>
<div class="t ax" style="left:133px;transform-origin:0 50%;top:347px;transform:translate(0.90px,0.00px) scaleX(1.011);">01:20</div>
<div class="t ax" style="left:133px;transform-origin:0 50%;top:357px;transform:translate(0.90px,0.00px) scaleX(1.011);">01:00</div>
<div class="t ax" style="left:133px;transform-origin:0 50%;top:366px;transform:translate(0.90px,0.00px) scaleX(1.011);">00:40</div>
<div class="t ax" style="left:133px;transform-origin:0 50%;top:375px;transform:translate(0.90px,0.00px) scaleX(1.011);">00:20</div>
<div class="t mono" style="left:273px;transform-origin:0 50%;top:393px;transform:translate(0.80px,0.00px) scaleX(0.765);">Time</div>
<div class="t mono" style="left:458px;transform-origin:0 50%;top:331px;transform:translate(0.90px,0.40px) scaleX(0.765);">127.0.0.1</div>
<div class="t mono" style="left:458px;transform-origin:0 50%;top:342px;transform:translate(0.90px,0.20px) scaleX(0.781);">www.anysecura.com</div>
<div class="t" style="left:535px;transform-origin:0 50%;top:66px;transform:translate(0.40px,0.20px) scaleX(0.858);color:#1c2a44;">Search</div>
<div class="t b" style="left:539px;transform-origin:0 50%;top:83px;transform:translate(0.20px,0.20px) scaleX(0.976);">Time and Range</div>
<div class="t" style="left:539px;transform-origin:0 50%;top:98px;transform:translate(0.30px,0.80px) scaleX(0.765);">From</div>
<div class="t" style="left:557px;transform-origin:0 50%;top:111px;transform:translate(0.00px,0.80px) scaleX(0.854);"><span style="color:#fff">03</span>/12/2026</div>
<div class="t" style="left:539px;transform-origin:0 50%;top:126px;transform:translate(0.30px,0.60px) scaleX(0.832);">To</div>
<div class="t" style="left:557px;transform-origin:0 50%;top:139px;transform:translate(0.00px,0.70px) scaleX(0.854);color:#8a8a8a;">12/30/1899</div>
<div class="t" style="left:539px;transform-origin:0 50%;top:154px;transform:translate(0.50px,0.20px) scaleX(0.712);">Time</div>
<div class="t" style="left:547px;transform-origin:0 50%;top:168px;transform:translate(0.20px,0.60px) scaleX(0.794);">All Day</div>
<div class="t" style="left:539px;transform-origin:0 50%;top:182px;transform:translate(0.50px,0.00px) scaleX(0.762);">Range</div>
<div class="t" style="left:548px;transform-origin:0 50%;top:194px;transform:translate(0.00px,0.90px) scaleX(0.770);">DESKTOP-0IH81NC</div>
<div class="t b" style="left:619px;transform-origin:0 50%;top:194px;transform:translate(0.40px,0.30px) scaleX(1.000);font-size:7px;color:#333;letter-spacing:0.500px;-webkit-text-stroke:0;">...</div>
<div class="t b" style="left:539px;transform-origin:0 50%;top:216px;transform:translate(0.30px,0.20px) scaleX(0.989);">Website</div>
<div class="t" style="left:539px;transform-origin:0 50%;top:235px;transform:translate(0.30px,0.50px) scaleX(0.822);">Categories</div>
<div class="t" style="left:547px;transform-origin:0 50%;top:248px;transform:translate(0.60px,0.20px) scaleX(0.633);">All</div>
<div class="t b" style="left:619px;transform-origin:0 50%;top:247px;transform:translate(0.40px,0.10px) scaleX(1.000);font-size:7px;color:#333;letter-spacing:0.500px;-webkit-text-stroke:0;">...</div>
<div class="t" style="left:598px;transform-origin:0 50%;top:271px;transform:translate(0.90px,0.20px) scaleX(0.786);">Search</div>
</body></html>
